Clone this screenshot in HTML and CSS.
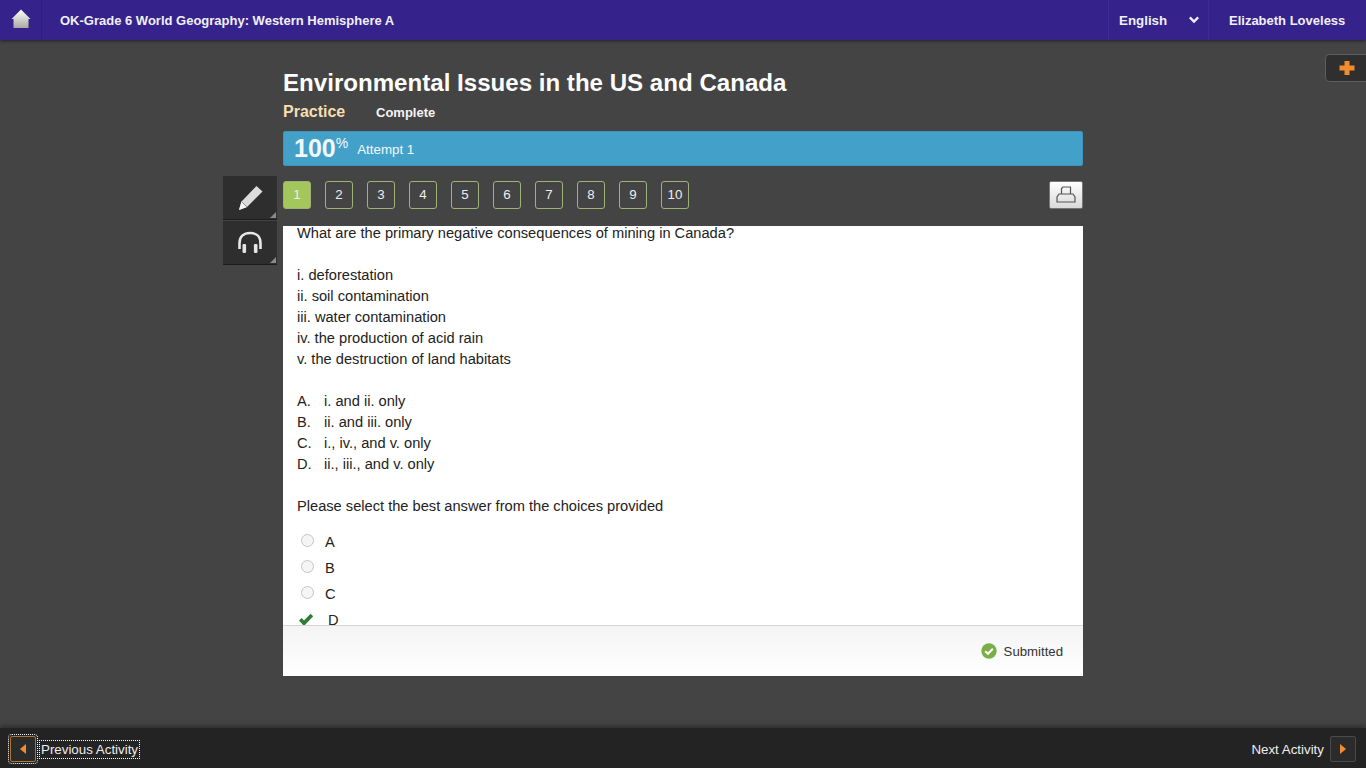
FILE: index.html
```html
<!DOCTYPE html>
<html>

<head>
    <meta name="viewport" content="width=device-width, initial-scale=1">
    <title>Environmental Issues in the US and Canada</title>
    <link rel="stylesheet" href="styles.css">
</head>

<body>
    <header class="topbar">
        <a class="home-btn" href="#">
            <svg width="24" height="20" viewBox="0 0 24 20">
                <defs>
                    <linearGradient id="homeFill" x1="0" y1="0" x2="0" y2="1">
                        <stop offset="0" stop-color="#ffffff" />
                        <stop offset="1" stop-color="#a9a9a4" />
                    </linearGradient>
                </defs>
                <path d="M12 0.5 L21.5 10 H19.5 V19 H4.5 V10 H2.5 Z" fill="url(#homeFill)" />
            </svg>
        </a>
        <div class="course-title">OK-Grade 6 World Geography: Western Hemisphere A</div>
        <div class="lang-select">
            <span>English</span>
            <svg width="10" height="8" viewBox="0 0 10 8">
                <path d="M0.8 1.4 L5 5.6 L9.2 1.4" fill="none" stroke="#f1eff8" stroke-width="2.4" />
            </svg>
        </div>
        <div class="user-name">Elizabeth Loveless</div>
    </header>

    <a class="plus-tab" href="#">
        <svg width="16" height="14" viewBox="0 0 16 14">
            <path d="M5.5 0 H10.5 V4.5 H15.5 V9.5 H10.5 V14 H5.5 V9.5 H0.5 V4.5 H5.5 Z" fill="#f28c2e" />
        </svg>
    </a>

    <main class="page">
        <div class="activity-head">
            <h1>Environmental Issues in the US and Canada</h1>
            <div class="activity-meta">
                <span class="activity-type">Practice</span>
                <span class="activity-status">Complete</span>
            </div>
            <div class="score-bar">
                <span class="score">100</span><sup class="score-pct">%</sup>
                <span class="attempt">Attempt 1</span>
            </div>
        </div>

        <div class="workspace">
            <aside class="tools">
                <a class="tool-btn" href="#">
                    <svg width="28" height="28" viewBox="0 0 28 28">
                        <path d="M20.5 2 L26.5 7.5 L11 23 L3 26 L5.5 17.5 Z" fill="#dcdcdc" />
                        <path d="M5.5 17.5 L11 23 L3 26 Z" fill="#f4f4f4" />
                        <path d="M5.5 17.5 L11 23" stroke="#8d8d8d" stroke-width="1" fill="none" />
                    </svg>
                </a>
                <a class="tool-btn" href="#">
                    <svg width="28" height="26" viewBox="0 0 28 26">
                        <path d="M3.5 19 V13 C3.5 6.5 8 3 14 3 C20 3 24.5 6.5 24.5 13 V19" fill="none" stroke="#e8e8e8" stroke-width="2.6" />
                        <rect x="6.5" y="14" width="3.6" height="9" rx="1.2" fill="#e4e4e4" />
                        <rect x="17.9" y="14" width="3.6" height="9" rx="1.2" fill="#e4e4e4" />
                    </svg>
                </a>
            </aside>

            <section class="activity">
                <div class="pager-row">
                    <nav class="pager">
                        <a class="page-num current" href="#">1</a>
                        <a class="page-num" href="#">2</a>
                        <a class="page-num" href="#">3</a>
                        <a class="page-num" href="#">4</a>
                        <a class="page-num" href="#">5</a>
                        <a class="page-num" href="#">6</a>
                        <a class="page-num" href="#">7</a>
                        <a class="page-num" href="#">8</a>
                        <a class="page-num" href="#">9</a>
                        <a class="page-num" href="#">10</a>
                    </nav>
                    <a class="print-btn" href="#">
                        <svg width="20" height="18" viewBox="0 0 20 18">
                            <path d="M5.5 8 V2.5 L7 1 H14.5 V8" fill="none" stroke="#555" stroke-width="1.2" />
                            <path d="M5.5 8 H3 L1 11 V16 H19 V11 L17 8 H14.5 M5.5 8 H14.5" fill="none" stroke="#555" stroke-width="1.2" />
                        </svg>
                    </a>
                </div>

                <div class="question-card">
                    <div class="question-scroll">
                        <div class="question-body">
                            <p>What are the primary negative consequences of mining in Canada?</p>
                            <p>i. deforestation<br>ii. soil contamination<br>iii. water contamination<br>iv. the production of acid rain<br>v. the destruction of land habitats</p>
                            <ul class="choices">
                                <li><span class="choice-key">A.</span>i. and ii. only</li>
                                <li><span class="choice-key">B.</span>ii. and iii. only</li>
                                <li><span class="choice-key">C.</span>i., iv., and v. only</li>
                                <li><span class="choice-key">D.</span>ii., iii., and v. only</li>
                            </ul>
                            <p>Please select the best answer from the choices provided</p>
                            <div class="answers">
                                <div class="answer"><span class="radio"></span>A</div>
                                <div class="answer"><span class="radio"></span>B</div>
                                <div class="answer"><span class="radio"></span>C</div>
                                <div class="answer picked">
                                    <svg class="check" width="16" height="14" viewBox="0 0 16 14">
                                        <path d="M1 7.5 L3.6 5 L6 7.6 L12.6 0.8 L15.2 3.2 L6 13 Z" fill="#2f7d32" />
                                    </svg>D
                                </div>
                            </div>
                        </div>
                    </div>
                    <div class="card-footer">
                        <svg width="16" height="16" viewBox="0 0 16 16">
                            <circle cx="8" cy="8" r="7.7" fill="#7cae46" />
                            <path d="M4.2 8.2 L7 10.8 L11.8 5.8" fill="none" stroke="#fff" stroke-width="2" />
                        </svg>
                        <span>Submitted</span>
                    </div>
                </div>
            </section>
        </div>
    </main>

    <footer class="bottombar">
        <a class="nav-link prev" href="#">
            <span class="nav-arrow focused">
                <svg width="8" height="12" viewBox="0 0 8 12"><path d="M7 1 V11 L1 6 Z" fill="#f28c2e" /></svg>
            </span>
            <span class="nav-label focused">Previous Activity</span>
        </a>
        <a class="nav-link next" href="#">
            <span class="nav-label">Next Activity</span>
            <span class="nav-arrow">
                <svg width="8" height="12" viewBox="0 0 8 12"><path d="M1 1 V11 L7 6 Z" fill="#f28c2e" /></svg>
            </span>
        </a>
    </footer>
</body>

</html>
```

FILE: styles.css
```css
* {
    box-sizing: border-box;
}

html,
body {
    height: 100%;
}

body {
    margin: 0;
    height: 768px;
    overflow: hidden;
    display: flex;
    flex-direction: column;
    background-color: #444444;
    font-family: "Liberation Sans", Arial, Helvetica, sans-serif;
    color: #222222;
}

a {
    color: inherit;
    text-decoration: none;
}

/* top bar */
.topbar {
    display: flex;
    align-items: stretch;
    height: 40px;
    flex: none;
    background-color: #35228a;
    box-shadow: 0 1px 3px rgba(0, 0, 0, 0.5);
    color: #f1eff8;
    font-size: 13px;
    font-weight: bold;
    line-height: 41px;
}

.home-btn {
    display: flex;
    align-items: center;
    justify-content: center;
    width: 42px;
    border-right: 1px solid #2f1e7c;
}

.home-btn svg {
    margin-top: -3px;
}

.course-title {
    flex: 1;
    padding-left: 18px;
}

.lang-select {
    display: flex;
    align-items: center;
    justify-content: space-between;
    width: 101px;
    padding: 0 9px 0 10px;
    border-left: 1px solid #3e2b93;
    border-right: 1px solid #3e2b93;
}

.lang-select span {
    font-size: 13.33px;
}

.user-name {
    width: 157px;
    padding-left: 20px;
}

/* tab on the right edge */
.plus-tab {
    position: absolute;
    top: 54px;
    right: 0;
    display: flex;
    align-items: center;
    justify-content: center;
    width: 41px;
    height: 28px;
    padding-left: 2px;
    background-color: #2f2f2f;
    border: 1px solid #5a5f63;
    border-right: none;
    border-radius: 5px 0 0 5px;
}

/* main column */
.page {
    flex: 1;
    margin-left: 223px;
    width: 860px;
}

.activity-head {
    margin-left: 60px;
    width: 800px;
    padding-top: 27px;
}

h1 {
    margin: 0;
    font-size: 24.1px;
    line-height: 32px;
    color: #ffffff;
}

.activity-meta {
    display: flex;
    align-items: baseline;
    margin-top: 1px;
    height: 31px;
    line-height: 24px;
}

.activity-type {
    width: 93px;
    font-size: 16px;
    font-weight: bold;
    color: #f5dfae;
}

.activity-status {
    font-size: 13px;
    font-weight: bold;
    color: #f4f4f4;
}

.score-bar {
    display: flex;
    align-items: center;
    height: 35px;
    padding-left: 10px;
    background-color: #43a1c9;
    border-radius: 2px;
    border: 1px solid #3b94ba;
    color: #f2f8fb;
}

.score {
    font-size: 25px;
    font-weight: bold;
}

.score-pct {
    align-self: flex-start;
    margin-top: 3px;
    font-size: 14px;
    line-height: 16px;
}

.attempt {
    margin-left: 9px;
    padding-top: 1px;
    font-size: 13.33px;
}

.workspace {
    display: flex;
    gap: 6px;
    margin-top: 10px;
}

/* tools on the left */
.tools {
    width: 54px;
    flex: none;
}

.tool-btn {
    position: relative;
    display: flex;
    align-items: center;
    justify-content: center;
    height: 44px;
    padding-right: 1px;
    background-color: #2e2e2e;
    border-bottom: 1px solid #1d1d1d;
    margin-bottom: 1px;
}

.tool-btn::after {
    content: "";
    position: absolute;
    right: 1px;
    bottom: 1px;
    border-left: 6px solid transparent;
    border-bottom: 6px solid #8a8a8a;
}

.activity {
    width: 800px;
}

.pager-row {
    display: flex;
    align-items: center;
    justify-content: space-between;
    height: 38px;
    margin-bottom: 12px;
}

.pager {
    display: flex;
    gap: 14px;
}

.page-num {
    display: block;
    width: 28px;
    height: 28px;
    line-height: 26px;
    text-align: center;
    font-size: 13.33px;
    color: #eeeeee;
    border: 1px solid #a0b277;
    border-radius: 3px;
}

.page-num.current {
    background-color: #a3c75a;
}

.print-btn {
    display: flex;
    align-items: center;
    justify-content: center;
    width: 34px;
    height: 28px;
    background-image: linear-gradient(#ffffff, #d9d9d9);
    border: 1px solid #777777;
    border-radius: 2px;
}

/* question card */
.question-card {
    width: 800px;
    height: 450px;
    display: flex;
    flex-direction: column;
    background-color: #ffffff;
}

.question-scroll {
    height: 399px;
    overflow: hidden;
}

.question-body {
    margin-top: -3px;
    padding: 0 14px;
    font-size: 14.65px;
    line-height: 21px;
}

.question-body p {
    margin: 0 0 21px;
}

.choices {
    list-style: none;
    margin: 0 0 21px;
    padding: 0;
}

.choice-key {
    display: inline-block;
    width: 27px;
}

.answers {
    margin-top: -9px;
}

.answer {
    display: flex;
    align-items: center;
    height: 26px;
    padding-left: 4px;
}

.radio {
    width: 13px;
    height: 13px;
    margin-top: -4px;
    margin-right: 11px;
    background-color: #f5f5f5;
    border: 1px solid #c4c4c4;
    border-radius: 50%;
}

.check {
    margin-right: 14px;
    margin-left: -3px;
}

.card-footer {
    flex: 1;
    display: flex;
    align-items: center;
    justify-content: flex-end;
    gap: 7px;
    padding-right: 20px;
    border-top: 1px solid #d5d5d5;
    background-image: linear-gradient(#f4f4f4, #ffffff);
    font-size: 13.2px;
    color: #333333;
}

/* bottom bar */
.bottombar {
    display: flex;
    align-items: center;
    justify-content: space-between;
    height: 40px;
    flex: none;
    padding: 2px 10px 0;
    background-color: #232323;
    box-shadow: 0 -2px 5px rgba(0, 0, 0, 0.35);
    color: #eeeeee;
    font-size: 13.33px;
}

.nav-link {
    display: flex;
    align-items: center;
    gap: 4px;
}

.next {
    gap: 6px;
}

.nav-arrow {
    display: flex;
    align-items: center;
    justify-content: center;
    width: 26px;
    height: 26px;
    background-color: #2b2b2b;
    border: 1px solid #4a4a4a;
    border-radius: 2px;
}

.prev .nav-arrow {
    border-color: #a9763a;
}

.focused {
    outline: 1px dotted #ffffff;
    outline-offset: 1px;
}

.nav-label.focused {
    outline-offset: 0;
    padding: 0 1px;
    line-height: 17px;
}
```
